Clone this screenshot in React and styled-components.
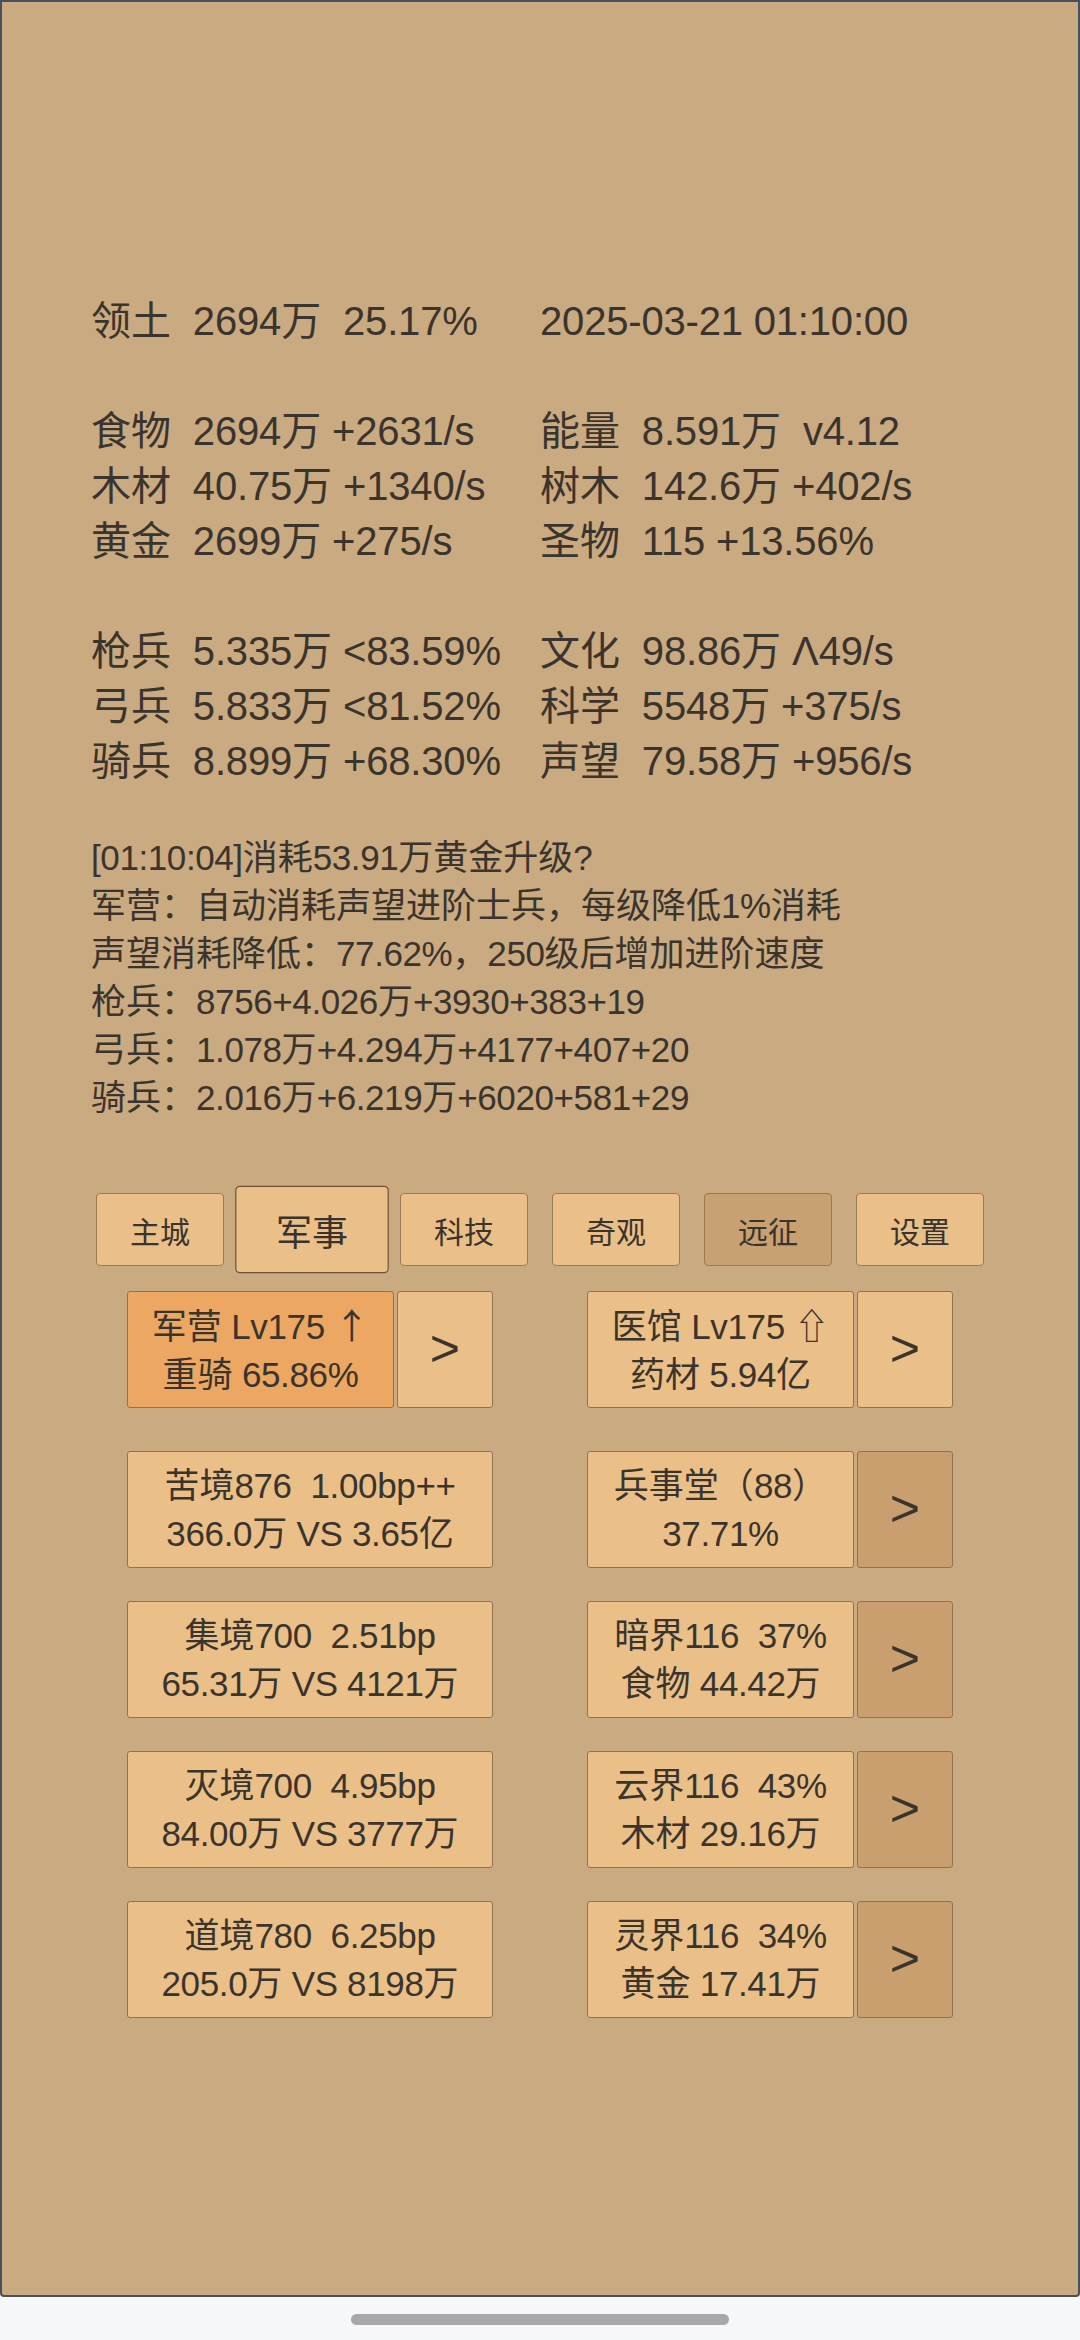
import React from "react";
import styled, { createGlobalStyle } from "styled-components";

const FONT = `"Liberation Sans", "Noto Sans CJK SC", "DejaVu Sans", sans-serif`;

const Global = createGlobalStyle`
  html, body { margin: 0; padding: 0; background: #f6f7f9; }
  body { font-family: ${FONT}; color: #3a342e; }
`;

const Frame = styled.div`
  box-sizing: border-box;
  width: 1080px;
  height: 2297px;
  background: #caaa80;
  border: 2px solid #4b5060;
  border-radius: 0 0 4px 4px;
  padding-top: 292px;
  display: flex;
  flex-direction: column;
`;

const Stats = styled.div`
  display: grid;
  grid-template-columns: 449px 1fr;
  padding-left: 89px;
  font-size: 40px;
  line-height: 55px;
  white-space: pre;
`;

const StatCell = styled.div`
  height: 55px;
`;

const Blank = styled.div`
  grid-column: 1 / span 2;
  height: 55px;
`;

const Log = styled.div`
  margin-top: 45px;
  padding-left: 89px;
  font-size: 35px;
  line-height: 48px;
  white-space: pre;
`;

const Latin = styled.span`
  letter-spacing: ${(p) => p.$ls}px;
`;

const Glyph = styled.span`
  font-family: "Noto Sans CJK SC", "DejaVu Sans", sans-serif;
`;

const Tabs = styled.div`
  margin-top: 71px;
  display: flex;
  justify-content: center;
  gap: 24px;
`;

const Tab = styled.div`
  box-sizing: border-box;
  width: 128px;
  height: 73px;
  display: flex;
  align-items: center;
  justify-content: center;
  font-size: 30px;
  background: ${(p) => (p.$dim ? "#c9a071" : "#eac088")};
  border: 1px solid ${(p) => (p.$active ? "#6f5236" : "#9b7a52")};
  border-radius: 4px;
  transform: ${(p) => (p.$active ? "scale(1.2)" : "none")};
`;

const Rows = styled.div`
  margin-top: 25px;
  display: flex;
  flex-direction: column;
  align-items: center;
  gap: 33px;
`;

const Row = styled.div`
  display: grid;
  grid-template-columns: 366px 366px;
  column-gap: 94px;
  margin-bottom: ${(p) => (p.$extra ? "10px" : "0")};
`;

const Group = styled.div`
  display: flex;
  gap: 3px;
`;

const Box = styled.div`
  box-sizing: border-box;
  width: ${(p) => (p.$wide ? "366px" : "267px")};
  height: 117px;
  display: flex;
  flex-direction: column;
  align-items: center;
  justify-content: center;
  font-size: 35px;
  line-height: 48px;
  white-space: pre;
  text-align: center;
  background: ${(p) => (p.$hot ? "#eca862" : "#eac088")};
  border: 1px solid #927250;
  border-radius: 3px;
`;

const Arrow = styled.div`
  box-sizing: border-box;
  width: 96px;
  height: 117px;
  display: flex;
  align-items: center;
  justify-content: center;
  font-size: 52px;
  line-height: 1;
  padding-bottom: 4px;
  background: ${(p) => (p.$dark ? "#c99f6f" : "#eac088")};
  border: 1px solid #927250;
  border-radius: 3px;
`;

const HomeBar = styled.div`
  height: 43px;
  display: flex;
  justify-content: center;
  padding-top: 17px;
  box-sizing: border-box;
`;

const Pill = styled.div`
  width: 378px;
  height: 11px;
  border-radius: 6px;
  background: #a8a8aa;
`;

/* Splits a string into Latin and CJK runs; Latin runs get the tighter
   spacing of the reference's whole-pixel glyph advances, arrows use the CJK face. */
function Txt({ children, ls }) {
  const parts = String(children).split(/([\x20-\x7E]+|[↑⇧])/).filter(Boolean);
  return parts.map((p, i) => {
    if (p === "↑" || p === "⇧") return <Glyph key={i}>{p}</Glyph>;
    if (/^[\x20-\x7E]+$/.test(p))
      return (
        <Latin key={i} $ls={ls}>
          {p}
        </Latin>
      );
    return <React.Fragment key={i}>{p}</React.Fragment>;
  });
}

const stats = [
  ["领土  2694万  25.17%", "2025-03-21 01:10:00"],
  null,
  ["食物  2694万 +2631/s", "能量  8.591万  v4.12"],
  ["木材  40.75万 +1340/s", "树木  142.6万 +402/s"],
  ["黄金  2699万 +275/s", "圣物  115 +13.56%"],
  null,
  ["枪兵  5.335万 <83.59%", "文化  98.86万 Λ49/s"],
  ["弓兵  5.833万 <81.52%", "科学  5548万 +375/s"],
  ["骑兵  8.899万 +68.30%", "声望  79.58万 +956/s"],
];

const logLines = [
  "[01:10:04]消耗53.91万黄金升级?",
  "军营：自动消耗声望进阶士兵，每级降低1%消耗",
  "声望消耗降低：77.62%，250级后增加进阶速度",
  "枪兵：8756+4.026万+3930+383+19",
  "弓兵：1.078万+4.294万+4177+407+20",
  "骑兵：2.016万+6.219万+6020+581+29",
];

const tabs = [
  { label: "主城" },
  { label: "军事", active: true },
  { label: "科技" },
  { label: "奇观" },
  { label: "远征", dim: true },
  { label: "设置" },
];

const rows = [
  {
    left: { lines: ["军营 Lv175 ↑", "重骑 65.86%"], hot: true, arrow: "light" },
    right: { lines: ["医馆 Lv175 ⇧", "药材 5.94亿"], arrow: "light" },
  },
  {
    left: { lines: ["苦境876  1.00bp++", "366.0万 VS 3.65亿"], wide: true },
    right: { lines: ["兵事堂（88）", "37.71%"], arrow: "dark" },
  },
  {
    left: { lines: ["集境700  2.51bp", "65.31万 VS 4121万"], wide: true },
    right: { lines: ["暗界116  37%", "食物 44.42万"], arrow: "dark" },
  },
  {
    left: { lines: ["灭境700  4.95bp", "84.00万 VS 3777万"], wide: true },
    right: { lines: ["云界116  43%", "木材 29.16万"], arrow: "dark" },
  },
  {
    left: { lines: ["道境780  6.25bp", "205.0万 VS 8198万"], wide: true },
    right: { lines: ["灵界116  34%", "黄金 17.41万"], arrow: "dark" },
  },
];

function Cell({ item }) {
  return (
    <Group>
      <Box $wide={item.wide} $hot={item.hot}>
        {item.lines.map((l, i) => (
          <div key={i}>
            <Txt ls={-0.35}>{l}</Txt>
          </div>
        ))}
      </Box>
      {item.arrow && <Arrow $dark={item.arrow === "dark"}>&gt;</Arrow>}
    </Group>
  );
}

export default function App() {
  return (
    <>
      <Global />
      <Frame>
        <Stats>
          {stats.map((r, i) =>
            r ? (
              <React.Fragment key={i}>
                <StatCell>
                  <Txt ls={-0.18}>{r[0]}</Txt>
                </StatCell>
                <StatCell>
                  <Txt ls={-0.18}>{r[1]}</Txt>
                </StatCell>
              </React.Fragment>
            ) : (
              <Blank key={i} />
            )
          )}
        </Stats>
        <Log>
          {logLines.map((l, i) => (
            <div key={i}>
              <Txt ls={-0.4}>{l}</Txt>
            </div>
          ))}
        </Log>
        <Tabs>
          {tabs.map((t) => (
            <Tab key={t.label} $active={t.active} $dim={t.dim}>
              {t.label}
            </Tab>
          ))}
        </Tabs>
        <Rows>
          {rows.map((r, i) => (
            <Row key={i} $extra={i === 0}>
              <Cell item={r.left} />
              <Cell item={r.right} />
            </Row>
          ))}
        </Rows>
      </Frame>
      <HomeBar>
        <Pill />
      </HomeBar>
    </>
  );
}
